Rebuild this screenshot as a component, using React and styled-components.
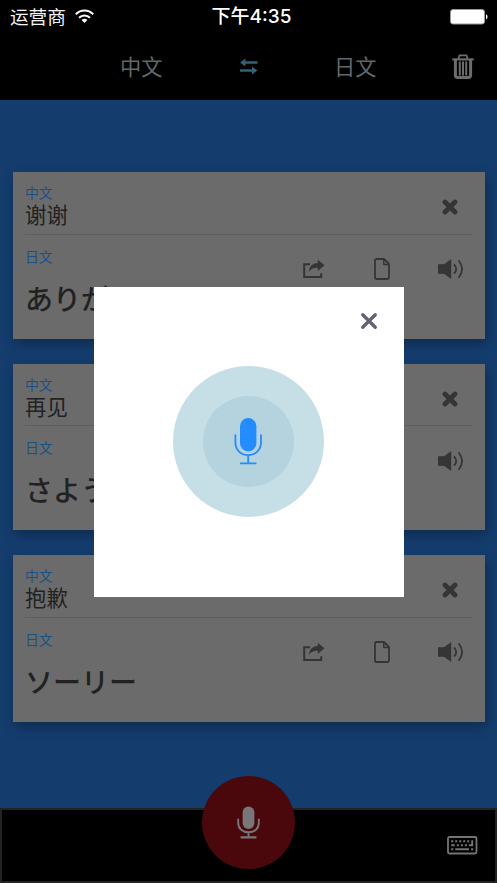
import React from 'react'
import styled, { createGlobalStyle } from 'styled-components'


const GlobalStyle = createGlobalStyle`
    body {
        margin: 0;
        background: #000;
        font-family: "Liberation Sans", "Noto Sans CJK SC", sans-serif;
    }

    svg {
        display: block;
        flex: none;
    }
`

const Screen = styled.div`
    display: flex;
    flex-direction: column;
    box-sizing: border-box;
    width: 497px;
    height: 883px;
    overflow: hidden;
    background-color: #000;
`

const StatusBar = styled.div`
    display: grid;
    grid-template-columns: 1fr auto 1fr;
    align-items: center;
    height: 34px;
    padding: 0 9px 0 10px;
    box-sizing: border-box;
    color: #f4f4f4;
`

const Carrier = styled.div`
    display: flex;
    align-items: center;
    gap: 9px;
    font-family: "Noto Sans CJK SC", sans-serif;
    font-size: 18.6px;
    line-height: 32px;
    padding-bottom: 2px;
`

const Clock = styled.div`
    padding-left: 5px;
    font-family: Inter, "Noto Sans CJK SC", sans-serif;
    font-size: 19px;
    font-weight: 500;
    line-height: 34px;
    color: #fff;
`

const Battery = styled.div`
    display: flex;
    justify-content: flex-end;
`

const NavBar = styled.div`
    display: flex;
    align-items: center;
    height: 66px;
    padding: 0 23px 2px 120px;
    box-sizing: border-box;
`

const Language = styled.div`
    width: ${props => props.width};
    font-family: "Noto Sans CJK SC", sans-serif;
    font-size: 21.2px;
    line-height: 64px;
    color: #62686b;
`

const SwapBtn = styled.div`
    width: 94px;
`

const TrashBtn = styled.div`
    margin-left: auto;
`

const CardList = styled.div`
    display: flex;
    flex-direction: column;
    gap: 25px;
    height: 707.5px;
    padding: 72.4px 12.5px 0;
    box-sizing: border-box;
    background-color: #143d6e;
`

const CardBox = styled.div`
    height: 166.5px;
    padding: 0 12.5px;
    box-sizing: border-box;
    background-color: #6b6b6b;
    box-shadow: 2px 5px 12px rgba(0, 0, 0, 0.3);
`

const SourceRow = styled.div`
    display: flex;
    justify-content: space-between;
    height: 62.5px;
    padding: 11px 14px 0 0;
    box-sizing: border-box;
    border-bottom: 1px solid #5e5e5e;
`

const ResultRow = styled.div`
    display: flex;
    justify-content: space-between;
    padding: 12px 8px 0 0;
`

const Label = styled.div`
    font-family: "Noto Sans CJK SC", sans-serif;
    font-size: 13.8px;
    line-height: 19px;
    color: #1a5088;
`

const SourceText = styled.div`
    font-family: "Noto Sans CJK SC", sans-serif;
    font-size: 21.4px;
    line-height: 23px;
    color: #222;
`

const ResultText = styled.div`
    margin-top: 14px;
    font-family: "Noto Sans CJK JP", sans-serif;
    font-size: 28px;
    font-weight: 500;
    line-height: 36px;
    color: #222;
    white-space: nowrap;
`

const RemoveBtn = styled.div`
    padding-top: 16px;
`

const Actions = styled.div`
    display: flex;
    align-items: center;
    height: 45px;
`

const ActionBtn = styled.div`
    margin-right: ${props => props.gap || '0'};
`

const Footer = styled.div`
    display: grid;
    grid-template-columns: 1fr 93px 1fr;
    height: 75px;
    box-sizing: border-box;
    border: 2px solid #232323;
`

const RecordBtn = styled.div`
    grid-column: 2;
    display: flex;
    align-items: center;
    justify-content: center;
    width: 93px;
    height: 93px;
    margin-top: -33.5px;
    border-radius: 50%;
    background-color: #4a080c;
`

const KeyboardBtn = styled.div`
    justify-self: end;
    padding: 26.5px 17px 0 0;
`

const Overlay = styled.div`
    position: fixed;
    top: 0;
    left: 0;
    display: flex;
    align-items: center;
    justify-content: center;
    width: 497px;
    height: 883px;
`

const Modal = styled.div`
    display: flex;
    flex-direction: column;
    align-items: center;
    width: 310px;
    height: 310px;
    background-color: #fff;
`

const CloseBtn = styled.div`
    align-self: flex-end;
    padding: 24px 25px 0 0;
    height: 55px;
`

const Ripple = styled.div`
    display: flex;
    align-items: center;
    justify-content: center;
    width: ${props => props.size};
    height: ${props => props.size};
    border-radius: 50%;
    background-color: ${props => props.color};
`

const ICON = '#353535'

function WifiIcon(){
    return (
        <svg width="19" height="15" viewBox="0 0 19 15" fill="none" stroke="#fff" strokeWidth="2">
            <path d="M0.8 5.2C5.8 0.2 13.2 0.2 18.2 5.2"/>
            <path d="M4 8.7C7.2 5.6 11.8 5.6 15 8.7"/>
            <path d="M9.5 14L6.6 11C8.2 9.4 10.8 9.4 12.4 11Z" fill="#fff" stroke="none"/>
        </svg>
    )
}

function BatteryIcon(){
    return (
        <svg width="38" height="16" viewBox="0 0 38 16">
            <rect x="0.5" y="0.5" width="34" height="14.5" rx="2.5" fill="#fff" stroke="#999"/>
            <path d="M36 5.2C38 6 38 9.5 36 10.3Z" fill="#fff"/>
        </svg>
    )
}

function SwapIcon(){
    return (
        <svg width="18" height="17" viewBox="0 0 18 17" fill="#356078">
            <path d="M0 4.5L5.5 0.5V3.3H17.5V5.7H5.5V8.5Z"/>
            <path d="M17.5 12.5L12 8.5V11.3H0V13.7H12V16.5Z"/>
        </svg>
    )
}

function TrashIcon(){
    return (
        <svg width="22" height="25" viewBox="0 0 22 25" fill="none" stroke="#6c6c6c">
            <path d="M6.5 4.8L7.5 1.4H14.5L15.5 4.8" strokeWidth="1.8"/>
            <path d="M0.3 5.4H21.7" strokeWidth="2.2"/>
            <path d="M3.4 5V21.3Q3.4 23.5 5.6 23.5H16.4Q18.6 23.5 18.6 21.3V5" strokeWidth="3"/>
            <path d="M7.8 7.5V21.5M11 7.5V21.5M14.2 7.5V21.5" strokeWidth="2"/>
        </svg>
    )
}

function CrossIcon({ size, color, weight }){
    return (
        <svg width={size} height={size} viewBox="0 0 16 16" fill="none" stroke={color} strokeWidth={weight} strokeLinecap="round">
            <path d="M3 3L13 13M13 3L3 13"/>
        </svg>
    )
}

function ShareIcon(){
    return (
        <svg width="22" height="20" viewBox="0 0 22 20">
            <path d="M7 5.2H1.2V18H18.2V14.2" fill="none" stroke={ICON} strokeWidth="2"/>
            <path d="M21.5 6.3L14.8 0.8V4C9.5 4.2 6.3 7.5 5.6 13.3C8 9.8 10.6 8.8 14.8 8.8V12Z" fill={ICON}/>
        </svg>
    )
}

function FileIcon(){
    return (
        <svg width="16" height="22" viewBox="0 0 16 22" fill="none" stroke={ICON} strokeWidth="1.8" strokeLinejoin="round">
            <path d="M1 2.4Q1 1 2.4 1H10L15 6V19.6Q15 21 13.6 21H2.4Q1 21 1 19.6Z"/>
            <path d="M9.8 1.4V6.5H14.8" strokeWidth="1.5"/>
        </svg>
    )
}

function VolumeIcon(){
    return (
        <svg width="26" height="20" viewBox="0 0 26 20">
            <path d="M0 5.3H6L13.2 0V20L6 14.7H0Z" fill={ICON}/>
            <path d="M16 5.3Q20.4 10 16 14.7M20.6 1.2Q27.6 10 20.6 18.8" fill="none" stroke={ICON} strokeWidth="1.8"/>
        </svg>
    )
}

function ModalMicIcon(){
    return (
        <svg width="29" height="48" viewBox="0 0 29 48" fill="none" stroke="#238cff" strokeWidth="1.8">
            <rect x="6" y="1" width="16.4" height="33.5" rx="8.2" fill="#238cff" stroke="none"/>
            <path d="M1.4 17.5V25.5C1.4 33 7 38.2 14.2 38.2S27 33 27 25.5V17.5M14.2 38.2V46.2M6 46.4H22.4"/>
        </svg>
    )
}

function RecordMicIcon(){
    return (
        <svg width="23" height="33" viewBox="0 0 23 33" fill="none" stroke="#777" strokeWidth="1.9">
            <rect x="5.6" y="0.5" width="11.8" height="22.5" rx="5.9" fill="#777" stroke="none"/>
            <path d="M1.2 13.5V17C1.2 22.6 5.5 26.3 11.5 26.3S21.8 22.6 21.8 17V13.5M11.5 26.3V31" strokeLinecap="round"/>
            <path d="M4.4 31.3H18.6" strokeWidth="2.2" strokeLinecap="round"/>
        </svg>
    )
}

function KeyboardIcon(){
    return (
        <svg width="31" height="19" viewBox="0 0 31 19" fill="none" stroke="#747474">
            <rect x="1" y="1" width="28.5" height="16.5" rx="1.5" strokeWidth="1.8"/>
            <path d="M4.2 5.2H23" strokeWidth="1.9" strokeDasharray="2.1 1.9"/>
            <path d="M4.2 9.2H7.8M9.8 9.2H11.9M13.8 9.2H15.9M17.8 9.2H19.9" strokeWidth="1.9"/>
            <path d="M25.2 4.2V9.2H21.8" strokeWidth="1.9"/>
            <path d="M4.2 13.3H6.3M8.3 13.3H22M24.1 13.3H26.2" strokeWidth="1.9"/>
        </svg>
    )
}

function Card({ source, result }){
    return (
        <CardBox>
            <SourceRow>
                <div>
                    <Label>中文</Label>
                    <SourceText>{source}</SourceText>
                </div>
                <RemoveBtn>
                    <CrossIcon size={16} color={ICON} weight={4.8}/>
                </RemoveBtn>
            </SourceRow>
            <ResultRow>
                <div>
                    <Label>日文</Label>
                    <ResultText>{result}</ResultText>
                </div>
                <Actions>
                    <ActionBtn gap="49px"><ShareIcon/></ActionBtn>
                    <ActionBtn gap="48px"><FileIcon/></ActionBtn>
                    <ActionBtn><VolumeIcon/></ActionBtn>
                </Actions>
            </ResultRow>
        </CardBox>
    )
}

function App(){
    return (
        <Screen>
            <GlobalStyle/>
            <StatusBar>
                <Carrier>运营商 <WifiIcon/></Carrier>
                <Clock>下午4:35</Clock>
                <Battery><BatteryIcon/></Battery>
            </StatusBar>
            <NavBar>
                <Language width="120px">中文</Language>
                <SwapBtn><SwapIcon/></SwapBtn>
                <Language width="50px">日文</Language>
                <TrashBtn><TrashIcon/></TrashBtn>
            </NavBar>
            <CardList>
                <Card source="谢谢" result="ありがとう"/>
                <Card source="再见" result="さようなら"/>
                <Card source="抱歉" result="ソーリー"/>
            </CardList>
            <Footer>
                <RecordBtn><RecordMicIcon/></RecordBtn>
                <KeyboardBtn><KeyboardIcon/></KeyboardBtn>
            </Footer>
            <Overlay>
                <Modal>
                    <CloseBtn>
                        <CrossIcon size={20} color="#65636f" weight={2.7}/>
                    </CloseBtn>
                    <Ripple size="151px" color="#c6dfe7">
                        <Ripple size="91px" color="#b4d3df">
                            <ModalMicIcon/>
                        </Ripple>
                    </Ripple>
                </Modal>
            </Overlay>
        </Screen>
    )
}

export default App
